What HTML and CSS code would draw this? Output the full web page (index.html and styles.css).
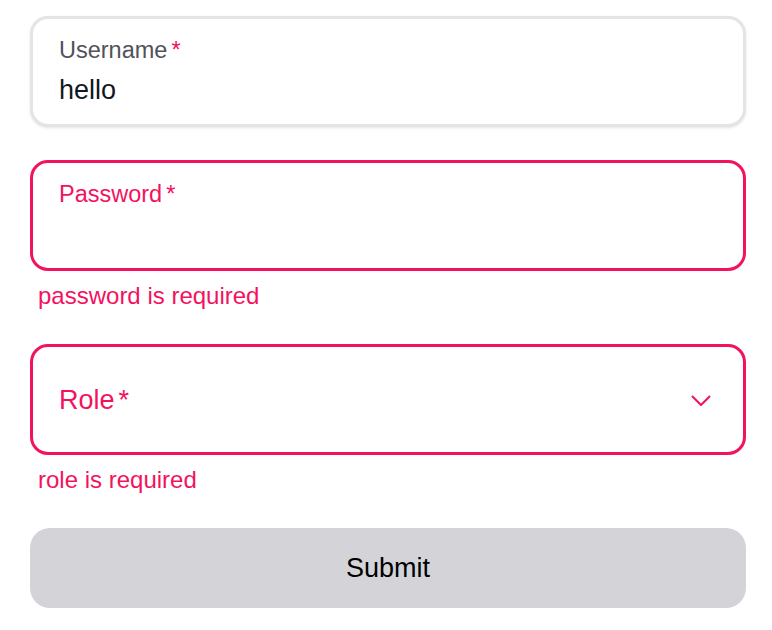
FILE: index.html
```html
<!DOCTYPE html>
<html>
<head>
<meta charset="utf-8">
<link rel="stylesheet" href="styles.css">
</head>
<body>
<form class="form">
  <div class="field">
    <div class="box box-default">
      <label class="label">Username<span class="req">*</span></label>
      <div class="value">hello</div>
    </div>
  </div>
  <div class="field field-invalid">
    <div class="box box-error">
      <label class="label label-error">Password<span class="req">*</span></label>
      <div class="value"></div>
    </div>
    <div class="error">password is required</div>
  </div>
  <div class="field field-invalid">
    <div class="box box-error box-select">
      <span class="select-label">Role<span class="req">*</span></span>
      <svg class="chevron" width="20" height="12" viewBox="0 0 20 12"><path d="M1.5 1.5 L10 10 L18.5 1.5" fill="none" stroke="#f31260" stroke-width="2" stroke-linecap="round" stroke-linejoin="round"/></svg>
    </div>
    <div class="error">role is required</div>
  </div>
  <button type="button" class="submit">Submit</button>
</form>
</body>
</html>
```
FILE: styles.css
```css
html, body {
  margin: 0;
  padding: 0;
  background: #ffffff;
}
body {
  font-family: "Liberation Sans", Arial, sans-serif;
}
.form {
  width: 716px;
  margin-left: 30px;
  padding-top: 16px;
  display: flex;
  flex-direction: column;
}
.field {
  display: flex;
  flex-direction: column;
  margin-bottom: 33px;
}
.field-invalid {
  margin-bottom: 34px;
}
.box {
  box-sizing: border-box;
  height: 111px;
  border: 3px solid #e4e4e7;
  border-radius: 18px;
  padding: 17px 25px 0 26px;
  display: flex;
  flex-direction: column;
  background: #fff;
}
.box-default {
  box-shadow: 0 1px 3px rgba(0,0,0,0.10);
}
.box-error {
  border-color: #f31260;
}
.label {
  font-size: 23.5px;
  line-height: 28px;
  color: #52525b;
}
.label-error {
  color: #f31260;
}
.req {
  color: #f31260;
  margin-left: 4px;
}
.value {
  margin-top: 10px;
  font-size: 27px;
  line-height: 32px;
  height: 32px;
  color: #11181c;
}
.box-select {
  flex-direction: row;
  align-items: center;
  justify-content: space-between;
  padding: 0 32px 0 26px;
  height: 111px;
}
.select-label {
  font-size: 27px;
  line-height: 32px;
  color: #f31260;
}
.chevron {
  display: block;
  margin-top: 3px;
}
.error {
  margin-top: 11px;
  padding-left: 8px;
  font-size: 24px;
  line-height: 28px;
  color: #f31260;
}
.submit {
  box-sizing: border-box;
  width: 100%;
  height: 80px;
  margin-top: 0;
  border: none;
  border-radius: 20px;
  background: #d4d4d8;
  color: #000;
  font-family: "Liberation Sans", Arial, sans-serif;
  font-size: 27px;
  padding: 0;
}
```
